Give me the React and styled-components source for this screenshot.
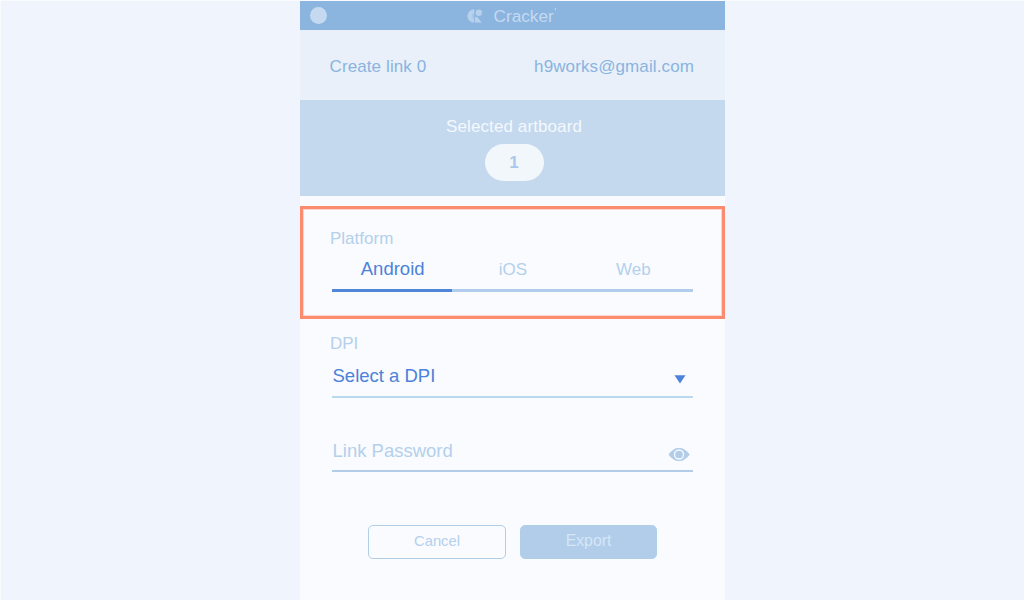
import React from 'react';
import styled, { createGlobalStyle } from 'styled-components';

const GlobalStyle = createGlobalStyle`
  * { box-sizing: border-box; }
  body {
    margin: 0;
    background: #f0f5fd;
    font-family: "Liberation Sans", Arial, sans-serif;
    overflow: hidden;
  }
  button { font-family: inherit; cursor: pointer; }
`;

const Page = styled.main`
  height: 600px;
  display: flex;
  justify-content: center;
  border-top: 1px solid #f9fbff;
  border-left: 1px solid #f9fbff;
`;

const Panel = styled.section`
  width: 425px;
  height: 599px;
  display: flex;
  flex-direction: column;
  background: #f9fbff;
`;

const TitleBar = styled.header`
  height: 29px;
  flex: none;
  display: flex;
  align-items: center;
  padding-left: 10px;
  background: #8bb4df;
`;

const WindowDot = styled.span`
  width: 17px;
  height: 17px;
  border-radius: 50%;
  background: #c5daf0;
`;

const Brand = styled.div`
  display: flex;
  align-items: center;
  margin-left: 140px;
  color: #c5daf0;
  font-size: 17.2px;
  line-height: 20px;
  svg { margin-right: 10.5px; }
  sup { font-size: 11px; line-height: 11px; align-self: flex-start; margin: 1px 0 0 0.5px; }
`;

const Account = styled.div`
  height: 70px;
  flex: none;
  display: flex;
  justify-content: space-between;
  padding: 27px 31px 0 29.5px;
  background: #e9f0f9;
  color: #89b4e1;
  font-size: 17px;
  line-height: 20px;
  letter-spacing: 0.11px;
`;

const Artboard = styled.div`
  height: 96px;
  flex: none;
  display: flex;
  flex-direction: column;
  align-items: center;
  padding: 17px 0 0 3px;
  background: #c5d9ee;
  color: #f3f8fd;
  font-size: 17px;
  line-height: 20px;
  letter-spacing: 0.1px;
`;

const Count = styled.span`
  width: 59px;
  height: 37px;
  margin-top: 6.5px;
  border-radius: 18.5px;
  background: #f2f7fc;
  color: #a9c8eb;
  font-weight: bold;
  font-size: 17px;
  line-height: 38px;
  text-align: center;
`;

const Highlight = styled.div`
  height: 113px;
  flex: none;
  margin-top: 10px;
  padding: 20px 29px 0 27px;
  border: 3px solid #fc8c70;
  box-shadow: inset 0 0 0 1px rgba(252, 140, 112, 0.35);
`;

const Label = styled.div`
  color: #b4d0eb;
  font-size: 17px;
  line-height: 20px;
`;

const Tabs = styled.div`
  display: flex;
  margin: 9px 0 0 2px;
`;

const Tab = styled.button`
  flex: 1 1 0;
  min-width: 0;
  height: 34px;
  padding: ${(p) => (p.$active ? '0 0 9px 1px' : '1px 0 8px 1px')};
  border: 0;
  border-bottom: 3px solid ${(p) => (p.$active ? '#4f86d9' : '#b0cdec')};
  background: none;
  color: ${(p) => (p.$active ? '#4c82d9' : '#b4d0ed')};
  font-size: ${(p) => (p.$active ? 18.5 : 17)}px;
  line-height: 20px;
`;

const Form = styled.div`
  padding: 15px 32px 0 30px;
`;

const Field = styled.div`
  display: flex;
  justify-content: space-between;
  align-items: center;
  height: ${(p) => p.$height}px;
  margin: ${(p) => p.$gap}px 0 0 2px;
  padding: ${(p) => p.$top}px ${(p) => p.$right}px 0 0.5px;
  border-bottom: 2px solid ${(p) => p.$line};
  color: ${(p) => p.$color};
  font-size: 18.5px;
  line-height: 22px;
  svg { margin-top: 6px; }
`;

const Actions = styled.div`
  display: flex;
  gap: 14px;
  margin: 53px 0 0 38px;
`;

const ActionButton = styled.button`
  width: ${(p) => (p.$filled ? 137 : 138)}px;
  height: 34px;
  padding: 0 0 2px;
  border: 1px solid #b1cee9;
  border-radius: 5px;
  background: ${(p) => (p.$filled ? '#b1cde9' : 'transparent')};
  color: ${(p) => (p.$filled ? '#d5e6f7' : '#b4d0ed')};
  font-size: ${(p) => (p.$filled ? 15.8 : 14.8)}px;
  line-height: 20px;
`;

const Logo = () => (
  <svg width="16" height="14" viewBox="0 0 16 14" fill="#b7d1ed">
    <path d="M7.2.2v3.7a3.2 3.2 0 0 0 0 6v3.9A6.8 6.8 0 0 1 7.2.2Z" />
    <path d="M7.2 3.9v6a3.2 3.2 0 0 1 0-6Z" fillOpacity="0.7" />
    <circle cx="11.8" cy="3.8" r="3.2" />
    <path d="M8 8h2.4l4.4 5.4H8Z" />
  </svg>
);

const Eye = () => (
  <svg width="22" height="13" viewBox="0 0 22 13">
    <path d="M0.5 6.5C4 1.8 7 0 11 0s7 1.8 10.7 6.5C18 11.2 15 13 11 13S4 11.2 0.5 6.5Z" fill="#b1cde9" />
    <circle cx="11" cy="6.5" r="4.5" fill="none" stroke="#f9fbff" strokeWidth="1.3" />
  </svg>
);

const Caret = () => (
  <svg width="12" height="9" viewBox="0 0 12 9" fill="#4c82d9">
    <path d="M0.5 0.2h11L6 8.6Z" />
  </svg>
);

const platforms = ['Android', 'iOS', 'Web'];

export default function App() {
  return (
    <>
      <GlobalStyle />
      <Page>
        <Panel>
          <TitleBar>
            <WindowDot />
            <Brand>
              <Logo />
              Cracker<sup>'</sup>
            </Brand>
          </TitleBar>
          <Account>
            <span>Create link 0</span>
            <span>h9works@gmail.com</span>
          </Account>
          <Artboard>
            <span>Selected artboard</span>
            <Count>1</Count>
          </Artboard>
          <Highlight>
            <Label>Platform</Label>
            <Tabs>
              {platforms.map((name, i) => (
                <Tab key={name} $active={i === 0}>{name}</Tab>
              ))}
            </Tabs>
          </Highlight>
          <Form>
            <Label>DPI</Label>
            <Field $height={43} $gap={1} $top={1} $right={7} $color="#4c82d9" $line="#bad9ec">
              <span>Select a DPI</span>
              <Caret />
            </Field>
            <Field $height={42} $gap={32} $top={2} $right={3} $color="#b4d0eb" $line="#b1cde9">
              <span>Link Password</span>
              <Eye />
            </Field>
            <Actions>
              <ActionButton>Cancel</ActionButton>
              <ActionButton $filled>Export</ActionButton>
            </Actions>
          </Form>
        </Panel>
      </Page>
    </>
  );
}
